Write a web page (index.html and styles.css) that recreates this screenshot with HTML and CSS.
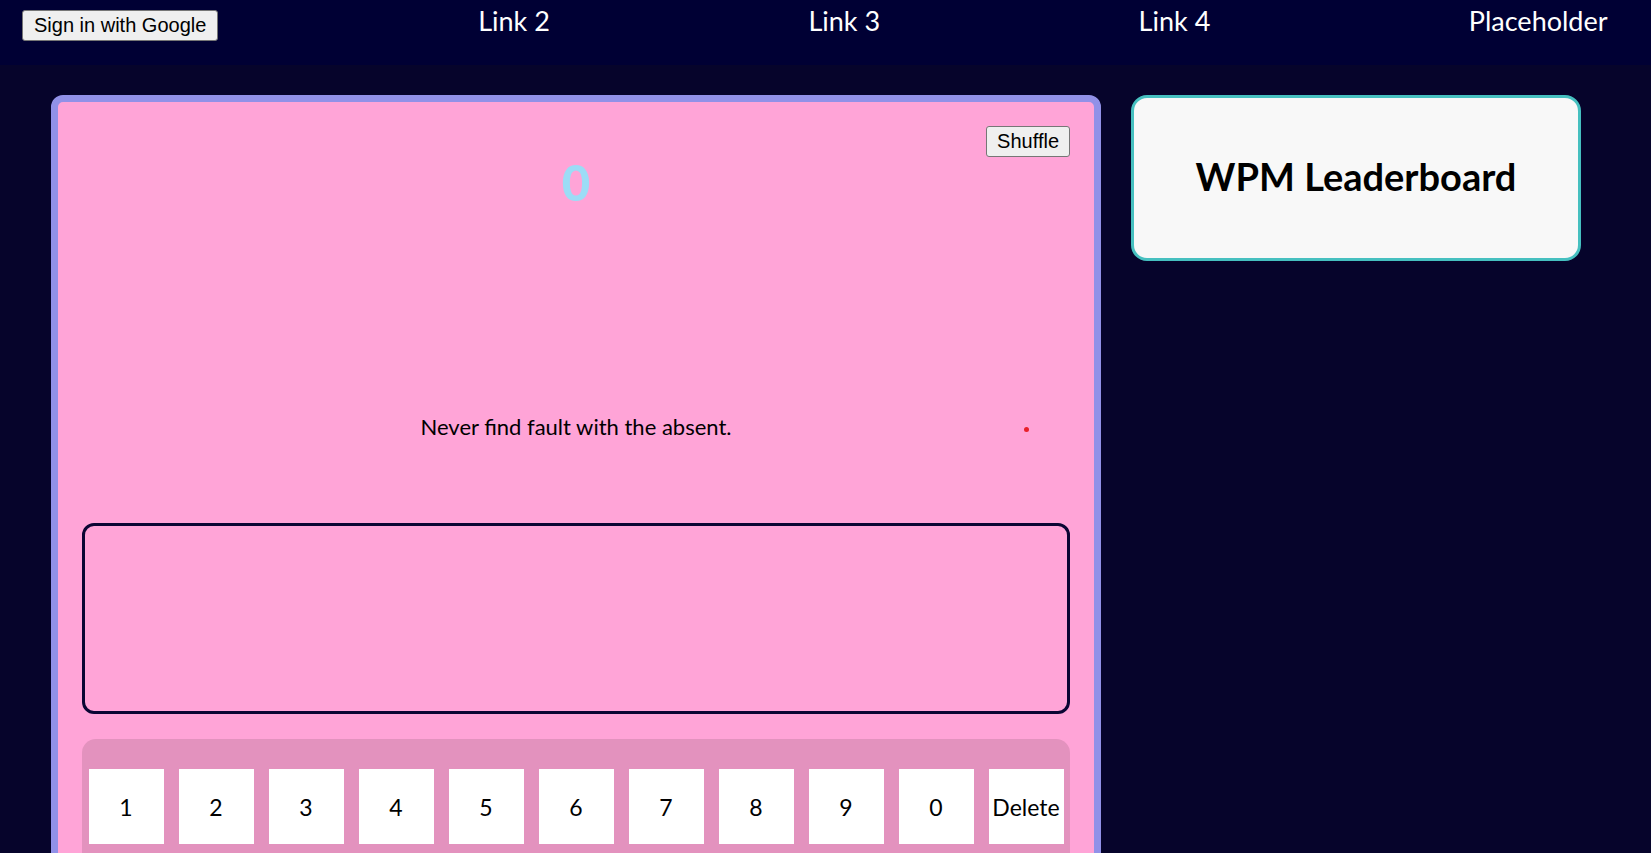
FILE: index.html
```html
<!DOCTYPE html>
<html lang="en">
<head>
<meta charset="utf-8">
<title>Typing Game</title>
<link rel="stylesheet" href="styles.css">
</head>
<body>
<nav class="nav">
  <div class="nav-cell"><button class="btn btn-signin">Sign in with Google</button></div>
  <div class="nav-cell nav-link">Link 2</div>
  <div class="nav-cell nav-link">Link 3</div>
  <div class="nav-cell nav-link">Link 4</div>
  <div class="nav-cell nav-link">Placeholder</div>
</nav>
<main class="main">
  <section class="game">
    <div class="game-top"><button class="btn btn-shuffle">Shuffle</button></div>
    <div class="counter">0</div>
    <div class="quote-row">
      <p class="quote">Never find fault with the absent.</p>
      <span class="dot"></span>
    </div>
    <div class="typebox"></div>
    <div class="keypad">
      <div class="key">1</div>
      <div class="key">2</div>
      <div class="key">3</div>
      <div class="key">4</div>
      <div class="key">5</div>
      <div class="key">6</div>
      <div class="key">7</div>
      <div class="key">8</div>
      <div class="key">9</div>
      <div class="key">0</div>
      <div class="key">Delete</div>
    </div>
  </section>
  <aside class="leaderboard">
    <h2 class="leaderboard-title">WPM Leaderboard</h2>
  </aside>
</main>
</body>
</html>
```
FILE: styles.css
```css
* { box-sizing: border-box; }

body {
  margin: 0;
  background: #06042b;
  font-family: Lato, "Noto Sans", sans-serif;
  color: #000;
}

.nav {
  display: grid;
  grid-template-columns: repeat(5, 1fr);
  height: 65px;
  background: #000034;
  align-items: start;
}

.nav-cell { min-width: 0; }

.btn {
  font-family: "Liberation Sans", Arial, sans-serif;
  font-size: 20px;
  line-height: 23px;
  color: #000;
  background: #efefef;
  border: 1px solid #767676;
  border-radius: 3px;
  padding: 3px 10px;
}

.btn-signin {
  margin: 10px 0 0 22px;
  padding: 3px 11px;
}

.nav-link {
  padding: 5px 0 0 148px;
  color: #fff;
  font-size: 27px;
  line-height: 32px;
  white-space: nowrap;
}

.main {
  display: flex;
  align-items: flex-start;
  gap: 30px;
  padding: 30px 0 0 51px;
}

.game {
  width: 1050px;
  flex: none;
  background: #ffa4d7;
  border: 7px solid #9191e8;
  border-radius: 12px;
  padding: 24px 24px 24px;
}

.game-top {
  display: flex;
  justify-content: flex-end;
}

.counter {
  margin-top: 1px;
  text-align: center;
  font-weight: 900;
  font-size: 49px;
  line-height: 48px;
  color: #9cdcf6;
}

.quote-row {
  position: relative;
  margin-top: 208px;
}

.quote {
  margin: 0;
  text-align: center;
  font-size: 22px;
  line-height: 26px;
}

.dot {
  position: absolute;
  left: 942px;
  top: 13px;
  width: 5px;
  height: 5px;
  border-radius: 50%;
  background: #e8202a;
}

.typebox {
  margin-top: 83px;
  height: 191px;
  border: 3px solid #0b0533;
  border-radius: 12px;
}

.keypad {
  margin-top: 25px;
  background: #e392be;
  border-radius: 14px;
  padding: 30px 6px 30px;
  display: flex;
  justify-content: center;
  gap: 15px;
}

.key {
  width: 75px;
  height: 75px;
  flex: none;
  background: #fff;
  display: flex;
  align-items: center;
  justify-content: center;
  font-size: 23px;
}

.leaderboard {
  width: 450px;
  height: 166px;
  flex: none;
  background: #f8f8f8;
  border: 3px solid #46c0c0;
  border-radius: 16px;
  display: flex;
  align-items: center;
  justify-content: center;
}

.leaderboard-title {
  margin: 0 0 4px;
  font-size: 38px;
  font-weight: 700;
}
```
